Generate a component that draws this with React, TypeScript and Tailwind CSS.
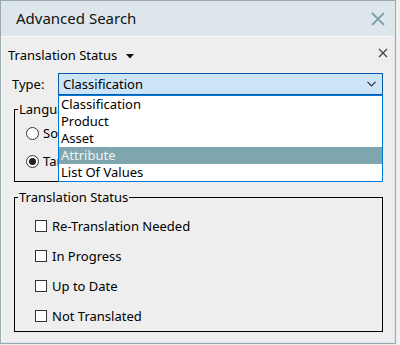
import React from "react";

const font = { fontFamily: '"Noto Sans", "Open Sans", sans-serif' };

function Radio({ checked, label }: { checked?: boolean; label: string }) {
  return (
    <div className="flex items-center h-[28px] pl-[11px]">
      <span className="w-[13px] h-[13px] rounded-full border border-[#333] bg-white flex items-center justify-center">
        {checked && <span className="w-[7px] h-[7px] rounded-full bg-[#222]" />}
      </span>
      <span className="ml-[4px] text-[13px] leading-[19px] text-black">{label}</span>
    </div>
  );
}

function Check({ label }: { label: string }) {
  return (
    <div className="flex items-center h-[30px] pl-[20px]">
      <span className="w-[12px] h-[12px] border border-[#333] bg-white" />
      <span className="ml-[5px] text-[13px] leading-[19px] text-black">{label}</span>
    </div>
  );
}

export default function App() {
  const items = ["Classification", "Product", "Asset", "Attribute", "List Of Values"];
  return (
    <div className="w-[400px] h-[345px] bg-[#f0f0f0] overflow-hidden" style={font}>
      <div className="w-[396px] h-[344px] border border-[#98aaae] flex flex-col bg-[#dde7eb]">
        <div className="h-[35px] flex items-center justify-between pl-[15px] pr-[8px] shrink-0">
          <span className="text-[15px] text-[#111] -mt-[1px]">Advanced Search</span>
          <svg width="16" height="16" viewBox="0 0 16 16" className="mr-[1px]">
            <path d="M2 2 L14 14 M14 2 L2 14" stroke="#7fa0a8" strokeWidth="1.8" />
          </svg>
        </div>
        <div className="flex-1 mr-[1px] mb-[1px] bg-[#eeeeee] border-t border-l border-[#f9f9f9] flex flex-col">
          <div className="flex items-center justify-between mt-[9px] pl-[6px] pr-[6px] h-[19px]">
            <div className="flex items-center">
              <span className="text-[13px] leading-[19px] text-black">Translation Status</span>
              <svg width="8" height="5" viewBox="0 0 8 5" className="ml-[9px] mt-[1px]">
                <path d="M0 0 L8 0 L4 4.5 Z" fill="#111" />
              </svg>
            </div>
            <svg width="10" height="10" viewBox="0 0 10 10" className="-mt-[6px]">
              <path d="M1 1 L9 9 M9 1 L1 9" stroke="#444" strokeWidth="1.3" />
            </svg>
          </div>
          <div className="flex items-center mt-[8px] h-[22px] pl-[10px]">
            <span className="w-[46px] text-[13px] leading-[19px] text-black">Type:</span>
            <div className="relative w-[325px] h-[22px]">
              <div className="h-full border border-[#0a5aa8] bg-[#cce4f7] flex items-center justify-between pl-[4px] pr-[6px]">
                <span className="text-[13px] leading-[19px] text-black">Classification</span>
                <svg width="9" height="6" viewBox="0 0 9 6">
                  <path d="M0.5 0.8 L4.5 4.8 L8.5 0.8" stroke="#333" strokeWidth="1.2" fill="none" />
                </svg>
              </div>
              <div className="absolute left-0 top-full w-[325px] border border-[#0078d7] bg-white z-10">
                {items.map((it) => (
                  <div
                    key={it}
                    className={
                      it === "Attribute"
                        ? "h-[17px] flex items-center pl-[2px] text-[13px] bg-[#7fa6ae] text-[#eef3f5]"
                        : "h-[17px] flex items-center pl-[2px] text-[13px] text-black"
                    }
                  >
                    {it}
                  </div>
                ))}
              </div>
            </div>
          </div>
          <fieldset className="mt-[5px] ml-[12px] mr-[11px] border border-black pb-[6px]">
            <legend className="ml-[3px] px-[1px] text-[13px] leading-[19px] text-black">Language</legend>
            <Radio label="Source" />
            <Radio checked label="Target" />
          </fieldset>
          <fieldset className="mt-[6px] ml-[12px] mr-[11px] border border-black pt-[4px]">
            <legend className="ml-[3px] px-[1px] text-[13px] leading-[19px] text-black">Translation Status</legend>
            <Check label="Re-Translation Needed" />
            <Check label="In Progress" />
            <Check label="Up to Date" />
            <Check label="Not Translated" />
          </fieldset>
        </div>
      </div>
    </div>
  );
}
